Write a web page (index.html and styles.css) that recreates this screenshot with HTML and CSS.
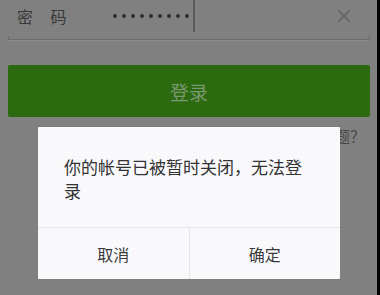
FILE: index.html
```html
<!DOCTYPE html>
<html lang="zh-CN">
<head>
    <meta charset="UTF-8">
    <meta name="viewport" content="width=device-width, initial-scale=1.0">
    <title>登录</title>
    <link rel="stylesheet" href="styles.css">
</head>
<body>
    <div class="screen">
        <div class="field">
            <span class="label">密 码</span>
            <div class="dots">
                <i></i><i></i><i></i><i></i><i></i><i></i><i></i><i></i><i></i>
                <span class="cursor"></span>
            </div>
            <svg class="clear" width="16" height="16" viewBox="0 0 16 16">
                <path d="M2 2 L14 14 M14 2 L2 14" stroke="#5f5f5f" stroke-width="1.4" fill="none"/>
            </svg>
        </div>
        <div class="underline"></div>

        <button class="login">登录</button>
        <div class="help">登录遇到问题？</div>

        <div class="dialog">
            <div class="message">你的帐号已被暂时关闭，无法登录</div>
            <div class="actions">
                <div class="action">取消</div>
                <div class="action">确定</div>
            </div>
        </div>
    </div>
    <div class="edge"></div>
</body>
</html>
```

FILE: styles.css
```css
* {
    margin: 0;
    padding: 0;
    box-sizing: border-box;
}

body {
    display: flex;
    width: 380px;
    height: 295px;
    overflow: hidden;
    background-color: #000;
    font-family: "Noto Sans CJK SC", "Noto Sans", sans-serif;
}

.screen {
    position: relative;
    width: 377px;
    height: 295px;
    background-color: #808080;
}

.edge {
    width: 3px;
    background-color: #000;
}

.field {
    display: flex;
    align-items: center;
    height: 36px;
    padding: 0 0 4px 17px;
}

.label {
    width: 96px;
    font-size: 16px;
    color: #383838;
    letter-spacing: 7px;
    white-space: nowrap;
}

.dots {
    display: flex;
    align-items: center;
    gap: 5px;
    height: 100%;
}

.dots i {
    width: 4px;
    height: 4px;
    border-radius: 50%;
    background-color: #2e2e2e;
}

.cursor {
    width: 1.5px;
    height: 100%;
    margin-left: -1px;
    background-color: #5a5a5a;
}

.clear {
    margin-left: auto;
    margin-right: 25px;
}

/* android style edit line with little end ticks */
.underline {
    height: 4px;
    margin: 0 7px 0 8px;
    border: 1px solid #6c6c6c;
    border-top: none;
    box-shadow: 0 1px 0 #8c8c8c;
}

.login {
    display: block;
    width: 362px;
    height: 52px;
    margin: 25px 0 0 8px;
    border: none;
    border-radius: 2px;
    background-color: #2b6a0f;
    color: #7a9870;
    font-family: inherit;
    font-size: 19px;
}

.help {
    margin-top: 8px;
    padding-right: 12px;
    text-align: right;
    font-size: 15px;
    line-height: 22px;
    color: #474747;
}

.dialog {
    position: absolute;
    left: 38px;
    top: 127px;
    width: 302px;
    height: 152px;
    display: flex;
    flex-direction: column;
    background-color: #f9f9fb;
    border-radius: 1px;
}

.message {
    height: 100px;
    padding: 28px 26px 0 26px;
    font-size: 17px;
    line-height: 24px;
    color: #333;
}

.actions {
    display: flex;
    flex: 1;
    border-top: 1px solid #e6e6e9;
}

.action {
    flex: 1;
    display: flex;
    align-items: center;
    justify-content: center;
    font-size: 16px;
    color: #3a3a3a;
}

.action + .action {
    border-left: 1px solid #e6e6e9;
}
```
